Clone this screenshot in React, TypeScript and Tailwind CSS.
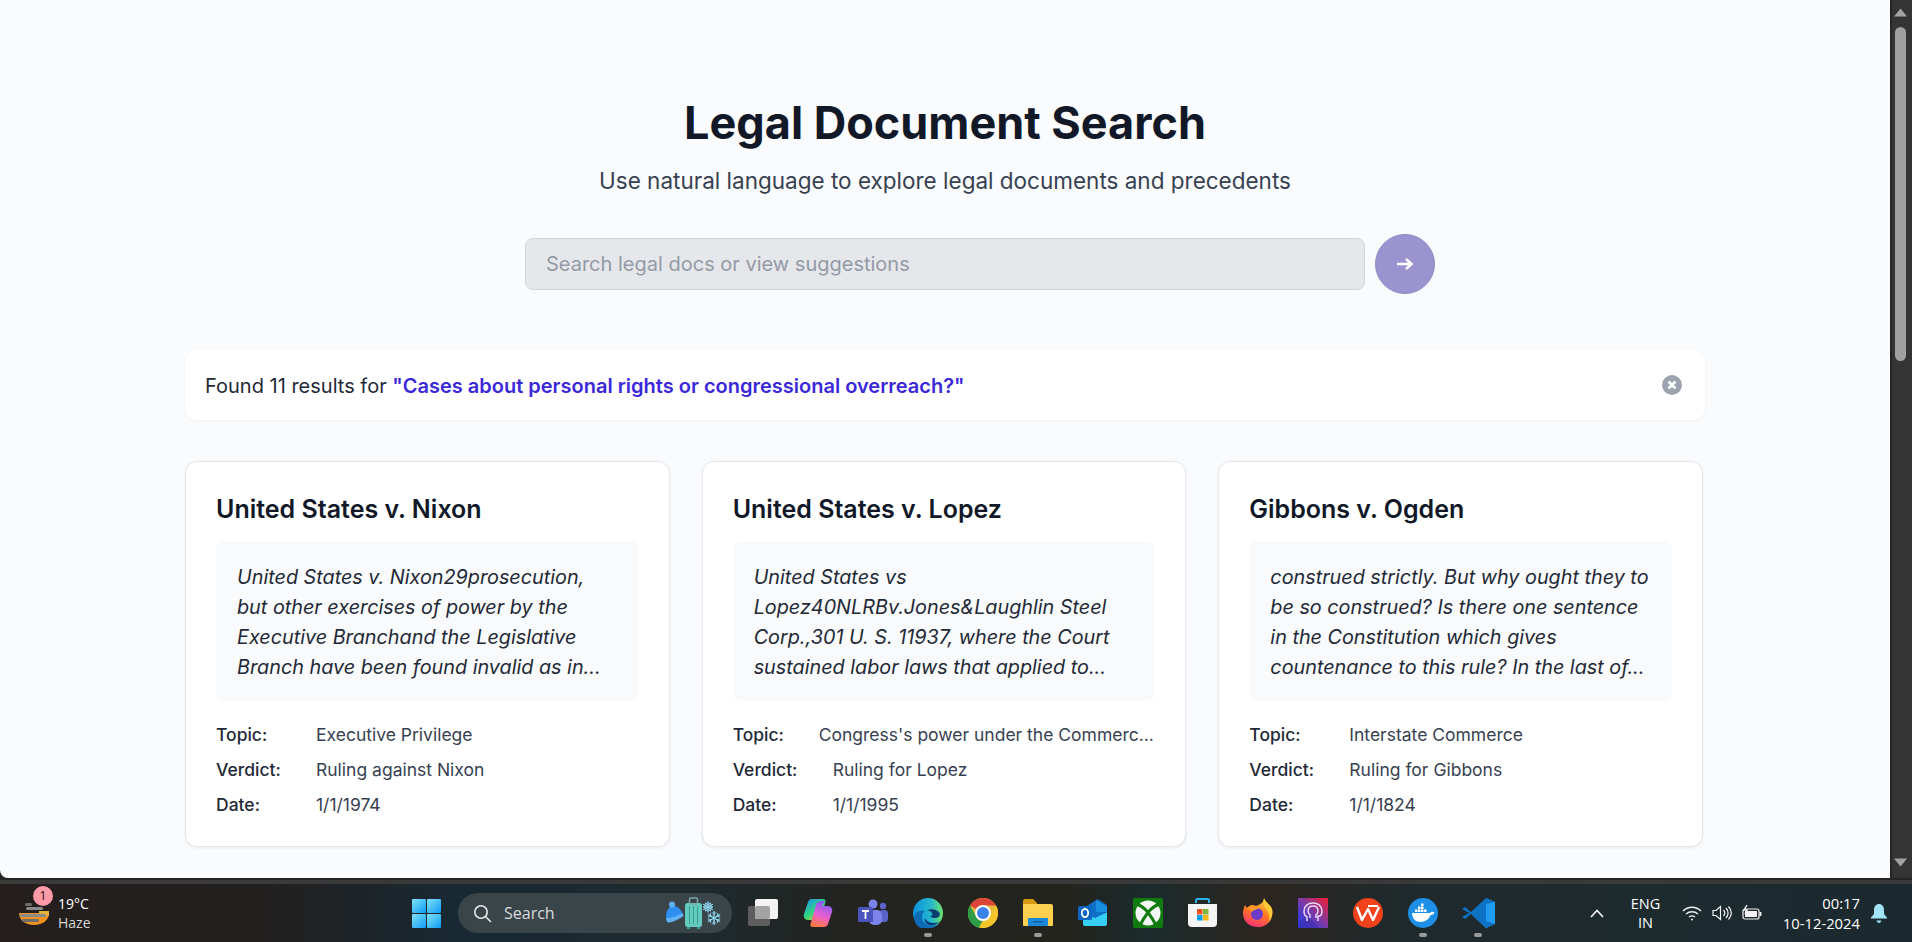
import React from "react";

const cards = [
  { title: "United States v. Nixon", text: "United States v. Nixon29prosecution, but other exercises of power by the Executive Branchand the Legislative Branch have been found invalid as in...", rows: [["Topic:", "Executive Privilege", "w-[100px]"], ["Verdict:", "Ruling against Nixon", "w-[100px]"], ["Date:", "1/1/1974", "w-[100px]"]] },
  { title: "United States v. Lopez", text: "United States vs Lopez40NLRBv.Jones&Laughlin Steel Corp.,301 U. S. 11937, where the Court sustained labor laws that applied to...", rows: [["Topic:", "Congress's power under the Commerc...", "w-[86px]"], ["Verdict:", "Ruling for Lopez", "w-[100px]"], ["Date:", "1/1/1995", "w-[100px]"]] },
  { title: "Gibbons v. Ogden", text: "construed strictly. But why ought they to be so construed? Is there one sentence in the Constitution which gives countenance to this rule? In the last of...", rows: [["Topic:", "Interstate Commerce", "w-[100px]"], ["Verdict:", "Ruling for Gibbons", "w-[100px]"], ["Date:", "1/1/1824", "w-[100px]"]] },
];

function Card({ c }: { c: (typeof cards)[number] }) {
  return (
    <div className="bg-white rounded-xl border border-[#e5e7eb] shadow-[0_1px_3px_rgba(0,0,0,0.07)] p-[30px] h-[386px]">
      <h3 className="text-[25px] leading-[32px] font-semibold text-[#111827] mt-[1px] mb-[16px]">{c.title}</h3>
      <p className="bg-[#f9fafb] rounded-lg pl-[21px] pr-[21px] pt-[21px] pb-[19px] text-[19.8px] leading-[30px] italic text-[#1f2937] h-[160px] overflow-hidden">{c.text}</p>
      <div className="mt-[22px] flex flex-col gap-[11px]">
        {c.rows.map((r) => (
          <div key={r[0]} className="flex text-[17.5px] leading-[24px]">
            <span className={`${r[2]} shrink-0 font-medium text-[#1f2937]`}>{r[0]}</span>
            <span className="text-[#374151] whitespace-nowrap overflow-hidden">{r[1]}</span>
          </div>
        ))}
      </div>
    </div>
  );
}

const Tri = ({ up }: { up: boolean }) => (
  <svg width="13" height="9" viewBox="0 0 13 9"><path d={up ? "M6.5 0.5 L13 8.5 H0 Z" : "M6.5 8.5 L13 0.5 H0 Z"} fill="#a3a3a3" /></svg>
);

const Ico = ({ children, dot }: { children: React.ReactNode; dot?: boolean }) => (
  <div className="relative w-[30px] h-[30px] shrink-0">
    <svg width="30" height="30" viewBox="0 0 30 30">{children}</svg>
    {dot && <div className="absolute left-[11px] top-[35px] w-[8px] h-[4px] rounded-full bg-[#9a9a9a]" />}
  </div>
);

function WeatherIcon() {
  return (
    <svg width="36" height="28" viewBox="0 0 36 28">
      <path d="M2 14h30c0 7-6 12-15 12S2 21 2 14z" fill="#f0921e" />
      <path d="M22 12h10v5H22z" fill="#e6b03c" />
      <rect x="8" y="4" width="7" height="3" rx="1.5" fill="#6e6e6e" />
      <rect x="9" y="8" width="17" height="3" rx="1.5" fill="#8a8a8a" />
      <rect x="3" y="15" width="26" height="3" rx="1.5" fill="#8a8a8a" />
      <rect x="5" y="20" width="17" height="3" rx="1.5" fill="#6e6e6e" />
    </svg>
  );
}

function WinLogo() {
  return (
    <svg width="29" height="29" viewBox="0 0 29 29" className="shrink-0">
      <defs>
        <linearGradient id="win" x1="0" y1="0" x2="1" y2="1">
          <stop offset="0" stopColor="#7fe3f7" />
          <stop offset="1" stopColor="#0f9bf5" />
        </linearGradient>
      </defs>
      <rect x="0" y="0" width="14" height="14" rx="1" fill="url(#win)" />
      <rect x="15" y="0" width="14" height="14" rx="1" fill="url(#win)" />
      <rect x="0" y="15" width="14" height="14" rx="1" fill="url(#win)" />
      <rect x="15" y="15" width="14" height="14" rx="1" fill="url(#win)" />
    </svg>
  );
}

const Flake = ({ cx, cy, r }: { cx: number; cy: number; r: number }) => (
  <g transform={`translate(${cx} ${cy})`} stroke="#8fd6f0" strokeWidth="1.4" strokeLinecap="round" fill="none">
    {[0, 60, 120].map((a) => (
      <g key={a} transform={`rotate(${a})`}>
        <path d={`M0 ${-r}V${r}`} />
        <path d={`M-2 ${-r + 1}L0 ${-r + 3}L2 ${-r + 1}M-2 ${r - 1}L0 ${r - 3}L2 ${r - 1}`} strokeWidth="1" />
      </g>
    ))}
  </g>
);

function SearchDeco() {
  return (
    <svg width="60" height="36" viewBox="0 0 60 36" className="shrink-0">
      <path d="M1 21C1 14 6 10 10 11c4 1 7 5 8 9-4 4-11 7-16 6-1-1-1-3-1-5z" fill="#2f8ff0" />
      <circle cx="7" cy="9.500" r="3" fill="#5cb0f5" />
      <path d="M1.500 23c5 0 11-2 16-5l1 3c-4 3-10 6-15 6.500-2 0-2-3-2-4.500z" fill="#62b2f6" />
      <rect x="20" y="8" width="17" height="24" rx="2.500" fill="#62cbbd" />
      <rect x="24.500" y="3" width="8" height="6" rx="1.500" fill="none" stroke="#7fa8a5" strokeWidth="1.500" />
      <path d="M24.500 11v18M28.500 11v18M32.500 11v18" stroke="#3d9c92" strokeWidth="1" />
      <rect x="22" y="32" width="3" height="2" fill="#3d9c92" />
      <rect x="32" y="32" width="3" height="2" fill="#3d9c92" />
      <Flake cx={43} cy={12} r={5} />
      <Flake cx={49} cy={23} r={6.500} />
    </svg>
  );
}

function Taskbar() {
  return (
    <div className="h-[58px] shrink-0 flex items-center text-white bg-[linear-gradient(90deg,#241f1d_0%,#221f1f_14%,#182933_24%,#1e2a2f_36%,#23231f_45%,#24241f_56%,#1b2b2c_60%,#2c2520_66%,#1f2a2d_74%,#1b2a30_100%)] font-['Open_Sans',sans-serif]">
      <div className="w-[412px] shrink-0 flex items-center pl-[17px] relative">
        <WeatherIcon />
        <div className="absolute left-[33px] top-[-9px] w-[20px] h-[20px] rounded-full bg-[#ff9aa8] text-[#1b1b1b] text-[13px] flex items-center justify-center">1</div>
        <div className="text-[14px] leading-[19px] ml-[5px] mt-[-1px]">
          <div>19°C</div>
          <div className="text-[#d8d8d8]">Haze</div>
        </div>
      </div>
      <WinLogo />
      <div className="ml-[17px] w-[274px] h-[40px] rounded-full bg-[#3a454a] flex items-center pl-[15px] pr-[7px] shrink-0">
        <svg width="19" height="19" viewBox="0 0 19 19" fill="none" stroke="#e8e8e8" strokeWidth="1.6"><circle cx="8" cy="8" r="6.2" /><path d="M12.5 12.5 L17.5 17.5" strokeLinecap="round" /></svg>
        <span className="ml-[12px] text-[16px] text-[#d8dcde]">Search</span>
        <div className="ml-auto"><SearchDeco /></div>
      </div>
      <div className="ml-[16px] flex items-center gap-[25px]">
        {/* task view */}
        <Ico>
          <rect x="0" y="8" width="22" height="20" rx="2" fill="#5d5d5d" />
          <rect x="7" y="1" width="23" height="20" rx="2" fill="#f3f3f3" />
          <rect x="7" y="8" width="15" height="13" rx="2" fill="#a3a3a3" />
        </Ico>
        {/* copilot */}
        <Ico>
          <defs>
            <linearGradient id="cpa" x1="0" y1="0" x2="0.6" y2="1"><stop offset="0" stopColor="#1f8ff5" /><stop offset="0.55" stopColor="#2fd67f" /><stop offset="1" stopColor="#fcd02e" /></linearGradient>
            <linearGradient id="cpb" x1="0.6" y1="0" x2="0.3" y2="1"><stop offset="0" stopColor="#7d5cf5" /><stop offset="0.55" stopColor="#ea5fd0" /><stop offset="1" stopColor="#ff7a3a" /></linearGradient>
          </defs>
          <path d="M9 1h11c2 0 3 1 2.500 3L17 23c-1 3-3 4-5 4H8l3-5H5c-3 0-5-3-4-6L5 4c.7-2 2-3 4-3z" fill="url(#cpa)" />
          <path d="M21 29H10c-2 0-3-1-2.500-3L13 7c1-3 3-4 5-4h4l-3 5h6c3 0 5 3 4 6l-4 12c-.7 2-2 3-4 3z" fill="url(#cpb)" />
        </Ico>
        {/* teams */}
        <Ico>
          <circle cx="15" cy="6" r="4.500" fill="#7b83eb" />
          <circle cx="25" cy="8" r="3.200" fill="#5b64c9" />
          <rect x="21" y="12" width="9" height="12" rx="3.500" fill="#5b64c9" />
          <rect x="11" y="12" width="13" height="15" rx="5" fill="#7b83eb" />
          <rect x="0" y="9" width="15" height="15" rx="1.500" fill="#4b53bc" />
          <path d="M4 13h7M7.500 13v8" stroke="#fff" strokeWidth="1.800" fill="none" />
        </Ico>
        {/* edge */}
        <Ico dot>
          <defs>
            <linearGradient id="edg" x1="0" y1="0.4" x2="1" y2="0.4"><stop offset="0" stopColor="#0c8fdc" /><stop offset="0.6" stopColor="#25b9cf" /><stop offset="1" stopColor="#6fe36a" /></linearGradient>
          </defs>
          <circle cx="15" cy="15" r="15" fill="url(#edg)" />
          <path d="M8 30C2 27 0 21 2 16c2-3 6-4 10-3-3 2-4 6-2 10 3 5 10 6 16 3-4 4-11 6-18 4z" fill="#0b6bb5" />
          <path d="M13 13c4-3 10-2 13 1 2 3 0 6-4 6-3 0-4-1-5-2 2 0 3-1 2-3-1-2-4-3-6-2z" fill="#0b3e6e" />
          <path d="M12 20c1 3 5 5 9 5 2 0 4-1 5-1-3 3-7 4-10 3-3-1-5-4-4-7z" fill="#083c78" />
        </Ico>
        {/* chrome */}
        <Ico>
          <circle cx="15" cy="15" r="15" fill="#e2b93b" />
          <path d="M15 0a15 15 0 0 1 13 7.500H15a7.500 7.500 0 0 0-6.500 3.750L2 7.500A15 15 0 0 1 15 0z" fill="#dc4437" />
          <path d="M2 7.500l6.500 11.250a7.500 7.500 0 0 0 6.500 3.750L11 30A15 15 0 0 1 2 7.500z" fill="#2f9d48" />
          <path d="M15 22.500a7.500 7.500 0 0 0 6.500-3.750L28 7.500A15 15 0 0 1 11 29.500z" fill="#f5c52c" />
          <circle cx="15" cy="15" r="8" fill="#fff" />
          <circle cx="15" cy="15" r="6" fill="#3b82ea" />
        </Ico>
        {/* explorer */}
        <Ico dot>
          <path d="M0 3a2 2 0 0 1 2-2h8l4 4v4H0z" fill="#d49a0c" />
          <path d="M0 6h28a2 2 0 0 1 2 2v19a1 1 0 0 1-1 1H1a1 1 0 0 1-1-1z" fill="#fbd04f" />
          <rect x="5" y="20" width="20" height="8" rx="1" fill="#1a88d8" />
          <rect x="10" y="23" width="10" height="1.500" fill="#0f5fa8" />
        </Ico>
        {/* outlook */}
        <Ico>
          <path d="M6 10L18 2c1-.6 2-.6 3 0l8 5v6L17 22H6z" fill="#1070c8" />
          <path d="M18 2l11 7v5H18z" fill="#1b8fe0" />
          <path d="M5 14l12 6 12-6v12a2 2 0 0 1-2 2H7a2 2 0 0 1-2-2z" fill="#36d0f5" />
          <rect x="0" y="8" width="14" height="14" rx="1.500" fill="#0e67c0" />
          <ellipse cx="7" cy="15" rx="3.200" ry="4" fill="none" stroke="#fff" strokeWidth="1.800" />
        </Ico>
        {/* xbox */}
        <Ico>
          <rect width="30" height="30" rx="2" fill="#107c10" />
          <circle cx="15" cy="15" r="12.500" fill="#f4f6f4" />
          <path d="M3 6Q10 8 15 14.500Q20 21 24 29M27 6Q20 8 15 14.500Q10 21 6 29" fill="none" stroke="#107c10" strokeWidth="3" />
        </Ico>
        {/* store */}
        <Ico>
          <path d="M8 5V2.500A1.500 1.500 0 0 1 9.500 1h10A1.500 1.500 0 0 1 21 2.500V5" fill="none" stroke="#2cb4ec" strokeWidth="2" />
          <path d="M0 6h29v19a4 4 0 0 1-4 4H4a4 4 0 0 1-4-4z" fill="#f4f4f4" />
          <rect x="9" y="11" width="5.500" height="5.500" fill="#f1511b" />
          <rect x="15" y="11" width="5.500" height="5.500" fill="#80b63a" />
          <rect x="9" y="17" width="5.500" height="5.500" fill="#02a3e8" />
          <rect x="15" y="17" width="5.500" height="5.500" fill="#fcb914" />
        </Ico>
        {/* firefox */}
        <Ico>
          <defs>
            <linearGradient id="ffx" x1="0.7" y1="0" x2="0.3" y2="1"><stop offset="0" stopColor="#ffd23a" /><stop offset="0.5" stopColor="#ff7a22" /><stop offset="1" stopColor="#ff2f78" /></linearGradient>
          </defs>
          <path d="M21 0c1 4 6 6 8 11 2 9-4 18-14 18C6 29 0 23 0 15c0-3 1-6 2-8l2 3c1-1 2-2 4-3 2 0 4 0 5 1 3-1 8-3 8-8z" fill="url(#ffx)" />
          <path d="M21 0c1 4 6 6 8 11 1 5 0 9-3 13 1-5 0-10-3-13-2-3-3-7-2-11z" fill="#ffc93a" />
          <circle cx="14" cy="16" r="6" fill="#6a3cc8" />
          <path d="M4 10c3-2 9-2 12 1-3 0-6 1-7 3-1-2-3-3-5-4z" fill="#ff9a2a" />
        </Ico>
        {/* purple app */}
        <Ico>
          <defs>
            <linearGradient id="pap" x1="0" y1="1" x2="1" y2="0"><stop offset="0" stopColor="#1a3cf5" /><stop offset="0.5" stopColor="#7a3aa8" /><stop offset="1" stopColor="#f02035" /></linearGradient>
          </defs>
          <rect width="30" height="30" fill="url(#pap)" />
          <path d="M0 30V24L10 18 22 30z" fill="#3d2a9c" opacity="0.5" />
          <path d="M9 23v-4c-2-1-3-3-3-6 0-5 4-8 9-8s9 3 9 8c0 2 0 4-2 5h-2v5" fill="none" stroke="#e8d8f5" strokeWidth="1.500" />
          <path d="M12 20v-3c-1-1-2-2-2-4 0-3 2-5 5-5s5 2 5 5c0 2-1 3-2 4v3" fill="none" stroke="#e8d8f5" strokeWidth="1.500" />
        </Ico>
        {/* wps */}
        <Ico>
          <circle cx="15" cy="15" r="15" fill="#f2421c" />
          <path d="M4 9l5 13 6-11 5 11 6-13" fill="none" stroke="#fff" strokeWidth="2.400" strokeLinejoin="round" />
          <path d="M15 8h10" stroke="#fff" strokeWidth="2" />
        </Ico>
        {/* docker */}
        <Ico dot>
          <circle cx="15" cy="15" r="15" fill="#1d8fe6" />
          <path d="M4 15h18c1-1.500 3-1.500 4.500-.5-1 2-2.500 2.500-4 2.500-1.500 4-5 7-10 7-5 0-8-3-8.500-9z" fill="#fff" />
          <g fill="#fff">
            <rect x="7" y="11.500" width="2.500" height="2.500" />
            <rect x="10" y="11.500" width="2.500" height="2.500" />
            <rect x="13" y="11.500" width="2.500" height="2.500" />
            <rect x="16" y="11.500" width="2.500" height="2.500" />
            <rect x="10" y="8.500" width="2.500" height="2.500" />
            <rect x="13" y="8.500" width="2.500" height="2.500" />
            <rect x="13" y="5.500" width="2.500" height="2.500" />
          </g>
        </Ico>
        {/* vscode */}
        <div className="relative w-[33px] h-[30px] shrink-0 ml-[-1px]">
          <svg width="33" height="32" viewBox="0 0 33 32" className="mt-[-1px]">
            <path d="M24 1l9 4v22l-9 4-14-13 14-11v15l-7-4z" fill="#1f9cf0" />
            <path d="M24 1L9 15 3 10 0 12l7 4-7 4 3 2 6-5 15 14 9-4-9-3V7l9-2z" fill="#0e72c4" />
          </svg>
          <div className="absolute left-[12px] top-[35px] w-[8px] h-[4px] rounded-full bg-[#9a9a9a]" />
        </div>
      </div>
      <div className="ml-[95px] flex items-center">
        <svg width="14" height="9" viewBox="0 0 14 9" fill="none" stroke="#f2f2f2" strokeWidth="1.700"><path d="M1 8l6-6.500L13 8" /></svg>
        <div className="ml-[27px] w-[29px] flex flex-col items-center text-[14.5px] leading-[19px] mt-[-1px]"><span>ENG</span><span>IN</span></div>
        <svg className="ml-[22px]" width="20" height="16" viewBox="0 0 20 16" fill="none" stroke="#f2f2f2" strokeWidth="1.300">
          <path d="M1 6c5-5 13-5 18 0M4 9c3.500-3 8.500-3 12 0M7 12c2-1.500 4-1.500 6 0" />
          <circle cx="10" cy="14.500" r="1" fill="#f2f2f2" stroke="none" />
        </svg>
        <svg className="ml-[10px]" width="20" height="16" viewBox="0 0 20 16" fill="none" stroke="#f2f2f2" strokeWidth="1.200">
          <path d="M1 5.500h3l4.500-4v13L4 10.500H1z" />
          <path d="M11.500 5c1.500 1.800 1.500 4.200 0 6M14 3c2.500 3 2.500 7 0 10M16.500 1.500c3.500 4 3.500 9 0 13" />
        </svg>
        <svg className="ml-[10px]" width="20" height="16" viewBox="0 0 20 16" fill="none" stroke="#f2f2f2" strokeWidth="1.200">
          <rect x="1" y="4" width="16" height="10" rx="2" />
          <path d="M18.500 7v4" strokeWidth="1.800" />
          <rect x="3" y="6" width="12" height="6" fill="#f2f2f2" stroke="none" />
          <path d="M5 0L2 5h3l-2 4" stroke="#f2f2f2" strokeWidth="1.400" />
        </svg>
        <div className="w-[98px] text-right text-[14.8px] leading-[20px] mt-[-1px]"><div>00:17</div><div>10-12-2024</div></div>
        <svg className="ml-[11px]" width="16" height="19" viewBox="0 0 16 19"><path d="M8 0c3 0 5 2.500 5 6v4l3 3.500v1H0v-1L3 10V6c0-3.500 2-6 5-6z" fill="#a3e3f7" /><path d="M5.500 16.500h5c-.5 1.500-1.500 2.500-2.500 2.500s-2-1-2.500-2.500z" fill="#a3e3f7" /></svg>
      </div>
    </div>
  );
}

export default function App() {
  return (
    <div className="h-screen w-full flex flex-col bg-[#262626] overflow-hidden font-['Inter',sans-serif]">
      <div className="flex flex-1 min-h-0">
        <main className="flex-1 min-w-0 bg-[#fafbfd] rounded-bl-lg overflow-hidden">
          <div className="w-[1520px] mx-auto">
            <h1 className="text-center text-[45px] leading-[56px] font-bold text-[#111827] mt-[95px]">Legal Document Search</h1>
            <p className="text-center text-[22.5px] leading-[32px] text-[#374151] mt-[14px]">Use natural language to explore legal documents and precedents</p>
            <div className="flex items-center gap-[10px] mt-[37px] ml-[340px]">
              <div className="w-[840px] h-[52px] rounded-lg bg-[#e5e7eb] border border-[#d1d5db] flex items-center px-[20px] text-[20px] text-[#949aa6]">Search legal docs or view suggestions</div>
              <div className="w-[60px] h-[60px] rounded-full bg-[#9b93d0] border border-[#8f88c6] flex items-center justify-center">
                <svg width="18" height="14" viewBox="0 0 18 14" fill="none" stroke="#fff" strokeWidth="2.600"><path d="M1 7h14M10 2l5.500 5L10 12" /></svg>
              </div>
            </div>
            <div className="mt-[56px] h-[70px] bg-white rounded-xl shadow-[0_1px_3px_rgba(0,0,0,0.05)] flex items-center justify-between pl-[20px] pr-[23px] text-[20px]">
              <div className="text-[#1f2937] mt-[1px]">Found 11 results for <span className="font-semibold text-[#3b28d9]">"Cases about personal rights or congressional overreach?"</span></div>
              <svg width="20" height="20" viewBox="0 0 20 20"><circle cx="10" cy="10" r="10" fill="#9ca3af" /><path d="M6.500 6.500l7 7M13.500 6.500l-7 7" stroke="#fff" strokeWidth="2.600" /></svg>
            </div>
            <div className="grid grid-cols-3 gap-[32px] mt-[41px] w-[1518px]">
              {cards.map((c) => <Card key={c.title} c={c} />)}
            </div>
          </div>
        </main>
        <div className="w-[22px] flex flex-col items-center pt-[8px] pb-[11px] pr-[3px] bg-[#343434] border-l-[2px] border-[#262626]">
          <Tri up={true} />
          <div className="w-[11px] h-[334px] mt-[10px] rounded-full bg-[#a0a0a0]" />
          <div className="mt-auto"><Tri up={false} /></div>
        </div>
      </div>
      <div className="h-[6px] shrink-0 bg-[#3a3a3a] border-t-[2px] border-[#242424]" />
      <Taskbar />
    </div>
  );
}
